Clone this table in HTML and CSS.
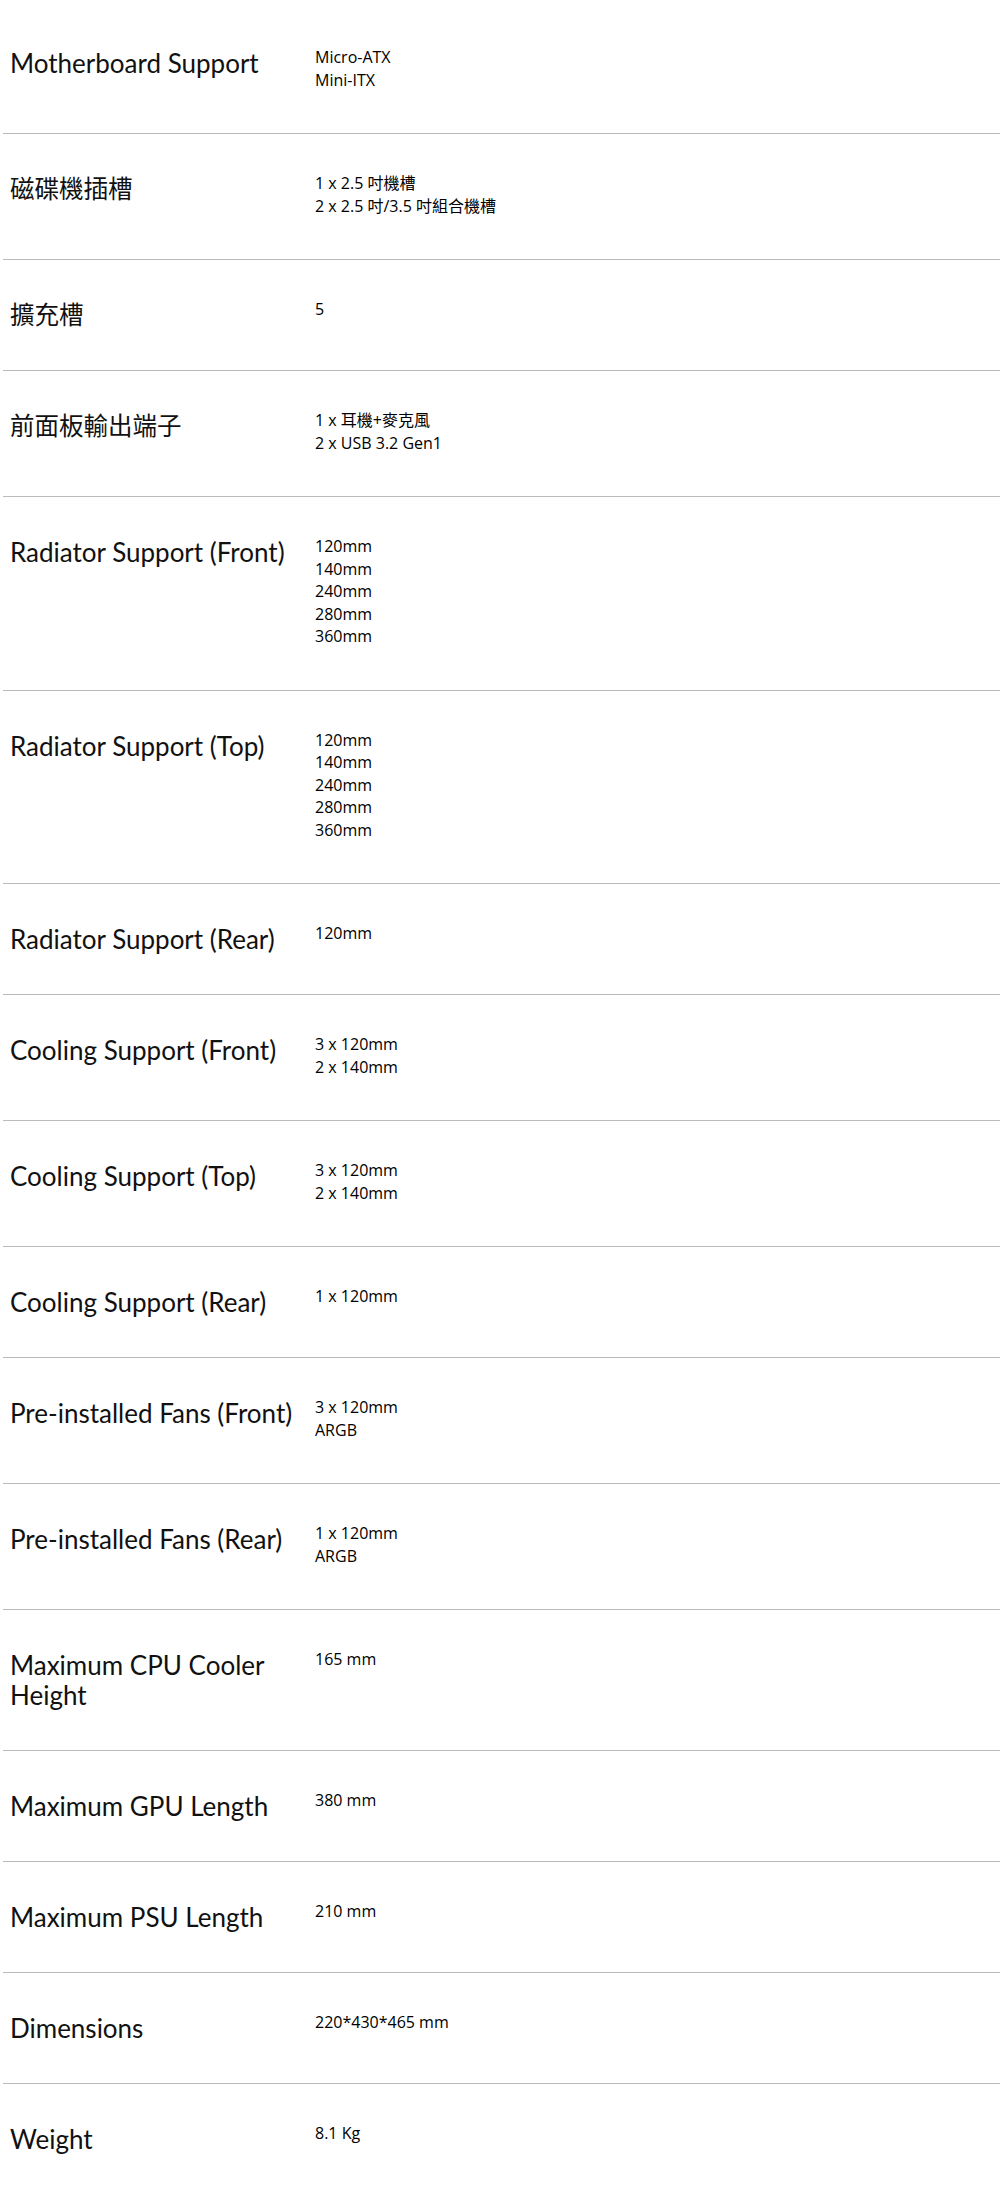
FILE: index.html
```html
<!DOCTYPE html>
<html lang="zh-Hant">
<head>
  <meta charset="UTF-8" />
  <meta name="viewport" content="width=device-width, initial-scale=1.0" />
  <title>規格</title>
  <link rel="stylesheet" href="styles.css">
</head>
<body>
  <div class="specs">
    <div class="row"><div class="label">Motherboard Support</div><div class="value">Micro-ATX<br>Mini-ITX</div></div>
    <div class="row"><div class="label cjk">磁碟機插槽</div><div class="value">1 x 2.5 吋機槽<br>2 x 2.5 吋/3.5 吋組合機槽</div></div>
    <div class="row"><div class="label cjk">擴充槽</div><div class="value">5</div></div>
    <div class="row"><div class="label cjk">前面板輸出端子</div><div class="value">1 x 耳機+麥克風<br>2 x USB 3.2 Gen1</div></div>
    <div class="row"><div class="label">Radiator Support (Front)</div><div class="value">120mm<br>140mm<br>240mm<br>280mm<br>360mm</div></div>
    <div class="row"><div class="label">Radiator Support (Top)</div><div class="value">120mm<br>140mm<br>240mm<br>280mm<br>360mm</div></div>
    <div class="row"><div class="label">Radiator Support (Rear)</div><div class="value">120mm</div></div>
    <div class="row"><div class="label">Cooling Support (Front)</div><div class="value">3 x 120mm<br>2 x 140mm</div></div>
    <div class="row"><div class="label">Cooling Support (Top)</div><div class="value">3 x 120mm<br>2 x 140mm</div></div>
    <div class="row"><div class="label">Cooling Support (Rear)</div><div class="value">1 x 120mm</div></div>
    <div class="row"><div class="label">Pre-installed Fans (Front)</div><div class="value">3 x 120mm<br>ARGB</div></div>
    <div class="row"><div class="label">Pre-installed Fans (Rear)</div><div class="value">1 x 120mm<br>ARGB</div></div>
    <div class="row"><div class="label">Maximum CPU Cooler Height</div><div class="value">165 mm</div></div>
    <div class="row"><div class="label">Maximum GPU Length</div><div class="value">380 mm</div></div>
    <div class="row"><div class="label">Maximum PSU Length</div><div class="value">210 mm</div></div>
    <div class="row"><div class="label">Dimensions</div><div class="value">220*430*465 mm</div></div>
    <div class="row"><div class="label">Weight</div><div class="value">8.1 Kg</div></div>
  </div>
</body>
</html>
```

FILE: styles.css
```css
body { margin: 8px 0 0 3px; background: #fff; color: #111; }
.specs { width: 100%; }
.row { display: grid; grid-template-columns: 312px 1fr; padding: 40px 0; border-bottom: 1px solid #bbb; }
.label { padding: 0 10px 0 7px; font-family: Lato, "Noto Sans CJK TC", sans-serif; font-size: 26px; line-height: 30px; }
.label.cjk { font-size: 24.5px; }
.value { font-family: "Open Sans", "Noto Sans CJK TC", sans-serif; font-size: 16px; line-height: 22.5px; color: #000; margin: -2px 0 2px; }
```
